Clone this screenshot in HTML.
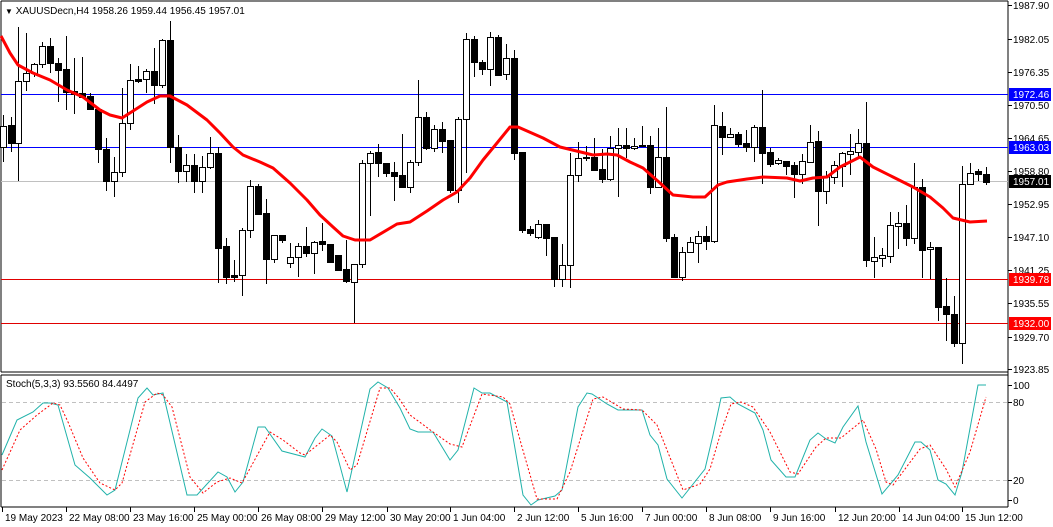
<!DOCTYPE html>
<html><head><meta charset="utf-8"><style>
html,body{margin:0;padding:0;background:#fff;width:1053px;height:527px;overflow:hidden}
svg{display:block;font-family:"Liberation Sans",Arial,sans-serif;font-size:10px}
</style></head><body>
<svg id="s" width="1053" height="527" xmlns="http://www.w3.org/2000/svg">
<rect x="0" y="0" width="1053" height="527" fill="#fff"/>
<line x1="1" y1="1" x2="1008" y2="1" stroke="#000"/>
<line x1="1" y1="1" x2="1" y2="372" stroke="#000"/>
<line x1="1" y1="372" x2="1008" y2="372" stroke="#000"/>
<line x1="1008" y1="1" x2="1008" y2="507" stroke="#000"/>
<line x1="1" y1="375" x2="1008" y2="375" stroke="#000"/>
<line x1="1" y1="375" x2="1" y2="507" stroke="#000"/>
<line x1="1" y1="507" x2="1008" y2="507" stroke="#000"/>
<line x1="1" y1="94.5" x2="1008" y2="94.5" stroke="#0000ff"/>
<line x1="1" y1="147.5" x2="1008" y2="147.5" stroke="#0000ff"/>
<line x1="1" y1="181.5" x2="1008" y2="181.5" stroke="#c0c0c0"/>
<line x1="1" y1="279.5" x2="1008" y2="279.5" stroke="#e00000"/>
<line x1="1" y1="323.5" x2="1008" y2="323.5" stroke="#e00000"/>
<line x1="2" y1="402.5" x2="1008" y2="402.5" stroke="#c0c0c0" stroke-dasharray="4,3"/>
<line x1="2" y1="480.5" x2="1008" y2="480.5" stroke="#c0c0c0" stroke-dasharray="4,3"/>
<g id="c"></g>
<text x="5" y="14" fill="#000"><tspan font-size="8">▼</tspan> XAUUSDecn,H4  1958.26 1959.44 1956.45 1957.01</text>
<text x="6" y="387" fill="#000">Stoch(5,3,3) 93.5560 84.4497</text>
</svg>
<script>
var s=document.getElementById('c'),h='';
var C=[[3,115,126,147,162,1],[11,117,125,143,152,0],[18,27,81,143,181,1],[26,33,73,81,91,1],[34,63,64,73,77,1],[42,42,46,64,68,1],[50,38,46,63,73,0],[58,58,63,70,102,0],[66,36,69,92,110,0],[74,58,91,94,114,0],[82,57,93,97,98,0],[90,93,96,109,109,0],[98,109,109,149,163,0],[106,138,149,181,191,0],[114,157,172,181,197,1],[122,88,123,172,177,1],[130,64,80,123,130,1],[138,66,79,81,83,0],[146,69,71,79,93,1],[154,48,71,85,104,0],[162,39,40,85,88,1],[170,21,40,147,163,0],[178,135,147,171,183,0],[186,154,165,171,182,1],[194,154,165,181,193,0],[202,156,167,181,193,1],[210,137,153,167,169,1],[218,147,153,248,283,0],[226,238,246,277,284,0],[234,260,275,277,282,0],[242,228,230,275,296,1],[250,180,186,230,238,1],[258,184,186,214,214,0],[266,199,213,259,284,0],[274,235,235,259,263,1],[282,235,235,240,243,0],[290,243,257,263,268,1],[298,243,246,257,277,1],[306,227,246,253,257,0],[314,241,242,253,274,1],[322,223,241,244,251,0],[330,244,244,262,262,0],[338,255,255,270,270,0],
[346,240,269,281,283,0],[354,264,264,282,323,1],[362,160,163,264,268,1],[370,151,153,163,216,1],[378,144,152,163,177,0],[386,163,163,173,177,0],[394,162,172,176,201,0],[402,134,175,187,188,0],[410,160,162,187,193,1],[418,80,117,162,166,1],[426,112,117,148,150,0],[434,125,129,148,152,1],[442,122,129,141,153,0],[450,140,140,190,193,0],[458,117,119,190,203,1],[466,33,39,119,173,1],[474,36,39,62,77,0],[482,60,62,69,75,0],[490,32,37,69,86,1],[498,35,37,75,76,0],[506,44,58,74,80,1],[514,50,58,153,160,0],[522,152,152,230,233,0],[530,226,229,233,236,0],[538,220,224,237,239,1],[546,224,224,238,256,0],[554,237,237,279,287,0],[562,244,265,279,287,1],[570,153,175,265,288,1],[578,142,158,175,182,1],[586,146,157,158,161,0],[594,138,157,170,171,0],[602,149,169,179,183,0],[610,136,148,179,181,1],[618,128,145,148,197,1],[626,128,145,148,158,0],[634,138,146,148,150,1],[642,126,145,146,147,0],[650,136,145,187,194,0],[658,128,157,187,188,1],[666,107,157,238,242,0],
[674,234,237,277,278,0],[682,247,252,277,281,1],[690,237,242,252,253,1],[698,231,236,243,263,1],[706,226,236,241,250,0],[714,105,125,241,243,1],[722,112,126,137,155,0],[730,128,134,137,137,1],[738,132,134,144,147,0],[746,130,143,147,152,0],[754,125,127,147,162,1],[762,90,127,153,184,0],[770,148,152,164,167,0],[778,158,160,163,165,1],[786,161,161,166,175,0],[794,162,165,174,198,0],[802,154,161,174,184,1],[810,125,142,162,163,1],[818,131,141,191,226,0],[826,171,176,191,204,1],[834,161,165,177,184,1],[842,152,153,166,187,1],[850,134,151,154,175,1],[858,129,143,152,157,1],[866,102,143,260,267,0],[874,237,257,261,278,1],[882,248,255,258,267,1],[890,212,225,256,263,1],[898,212,223,226,249,1],[906,205,223,238,246,0],[914,163,187,238,244,1],[922,179,187,250,278,0],[930,242,247,249,279,1],[938,247,247,307,321,0],[946,278,306,314,341,0],[954,296,314,343,347,0],[962,166,184,343,364,1],[970,163,173,184,184,1],[978,169,171,174,181,0],[986,167,174,182,185,0]];
var MA=[[1,36],[10,53],[18,65],[33,73],[50,80],[67,90],[83,97],[100,110],[110,115],[122,118],[133,111],[147,102],[160,96],[170,96],[187,105],[207,120],[220,133],[233,147],[243,155],[260,162],[273,168],[290,183],[307,200],[320,215],[333,227],[343,236],[355,240],[370,240],[397,224],[410,222],[427,211],[443,200],[457,192],[470,178],[483,160],[497,143],[510,127],[518,127],[543,138],[560,147],[593,155],[607,154],[617,155],[630,162],[643,168],[660,183],[673,195],[693,197],[705,197],[718,185],[727,182],[747,179],[763,177],[787,178],[800,181],[813,178],[827,177],[840,167],[860,157],[873,167],[893,177],[913,187],[930,197],[943,208],[953,218],[970,222],[987,221]];
var K=[[2,455],[17,420],[33,412],[43,403],[50,403],[58,405],[75,465],[90,478],[107,495],[115,490],[138,398],[147,388],[153,395],[163,393],[187,495],[197,495],[218,472],[227,477],[235,492],[243,482],[258,427],[265,427],[282,451],[305,457],[315,438],[322,429],[332,436],[347,492],[370,389],[378,382],[388,388],[400,408],[410,429],[418,432],[433,432],[450,460],[458,450],[474,388],[482,393],[490,393],[507,402],[523,495],[531,505],[538,500],[555,496],[562,490],[578,407],[587,393],[592,394],[607,404],[618,410],[642,410],[650,435],[658,445],[667,479],[682,498],[705,469],[713,435],[721,398],[730,397],[738,404],[755,413],[763,430],[771,460],[786,477],[795,477],[810,440],[818,433],[826,439],[835,443],[843,427],[858,406],[866,442],[882,494],[898,475],[915,442],[921,442],[930,450],[938,480],[946,484],[955,495],[962,472],[978,385],[986,385]];
var D=[[2,470],[20,430],[37,415],[53,403],[60,405],[68,422],[83,458],[100,483],[115,490],[122,483],[145,402],[157,393],[163,395],[172,407],[190,477],[203,493],[217,482],[230,478],[242,483],[270,432],[283,440],[300,453],[305,455],[330,435],[337,442],[350,470],[357,465],[380,388],[390,388],[398,397],[410,415],[433,432],[450,444],[462,447],[482,394],[503,397],[510,404],[522,447],[537,499],[557,499],[570,472],[593,399],[603,397],[623,409],[642,410],[657,425],[683,490],[700,484],[710,469],[721,432],[731,404],[741,402],[753,407],[770,432],[790,472],[798,474],[816,447],[826,438],[841,438],[863,420],[876,449],[886,482],[893,485],[920,449],[930,445],[946,469],[955,487],[970,452],[986,397]];
function pts(a){return a.map(function(p){return p[0]+','+p[1]}).join(' ')}
C.forEach(function(c){var x=c[0];
h+='<line x1="'+(x+.5)+'" y1="'+c[1]+'" x2="'+(x+.5)+'" y2="'+c[4]+'" stroke="#000"/>';
var bh=Math.max(c[3]-c[2],1);
if(c[5])h+='<rect x="'+(x-2.5)+'" y="'+(c[2]+.5)+'" width="6" height="'+bh+'" fill="#fff" stroke="#000"/>';
else h+='<rect x="'+(x-3)+'" y="'+c[2]+'" width="7" height="'+(bh+1)+'" fill="#000"/>';});
h+='<polyline points="'+pts(MA)+'" fill="none" stroke="#ff0000" stroke-width="3" stroke-linejoin="round"/>';
h+='<polyline points="'+pts(K)+'" fill="none" stroke="#20b2aa" stroke-width="1"/>';
h+='<polyline points="'+pts(D)+'" fill="none" stroke="#ff0000" stroke-width="1" stroke-dasharray="2,2"/>';
var L=[['1987.90',5],['1982.05',39],['1976.35',72],['1970.50',105],['1964.65',138],['1958.80',171],['1952.95',204],['1947.10',237],['1941.25',270],['1935.55',303],['1929.70',337],['1923.85',369]];
L.forEach(function(l){h+='<line x1="1008" y1="'+(l[1]+.5)+'" x2="1012" y2="'+(l[1]+.5)+'" stroke="#000"/><text x="1013" y="'+(l[1]+4)+'">'+l[0]+'</text>';});
[['1972.46',94,'#0000ff'],['1963.03',147,'#0000ff'],['1957.01',181,'#000'],['1939.78',279,'#ff0000'],['1932.00',323,'#ff0000']].forEach(function(t){
h+='<rect x="1009" y="'+(t[1]-6)+'" width="42" height="13" fill="'+t[2]+'"/><text x="1013" y="'+(t[1]+4)+'" fill="#fff">'+t[0]+'</text>';});
[['100',385],['80',402],['20',480],['0',500]].forEach(function(t){h+='<line x1="1008" y1="'+(t[1]+.5)+'" x2="1012" y2="'+(t[1]+.5)+'" stroke="#000"/><text x="1013" y="'+(t[1]+4)+'">'+t[0]+'</text>';});
var T=[[2,'19 May 2023'],[66,'22 May 08:00'],[130,'23 May 16:00'],[194,'25 May 00:00'],[258,'26 May 08:00'],[322,'29 May 12:00'],[387,'30 May 20:00'],[450,'1 Jun 04:00'],[514,'2 Jun 12:00'],[578,'5 Jun 16:00'],[642,'7 Jun 00:00'],[706,'8 Jun 08:00'],[770,'9 Jun 16:00'],[835,'12 Jun 20:00'],[899,'14 Jun 04:00'],[962,'15 Jun 12:00']];
T.forEach(function(t){h+='<line x1="'+(t[0]+.5)+'" y1="507" x2="'+(t[0]+.5)+'" y2="512" stroke="#000"/><text x="'+(t[0]+3)+'" y="521">'+t[1]+'</text>';});
s.innerHTML=h;
</script>
</body></html>
